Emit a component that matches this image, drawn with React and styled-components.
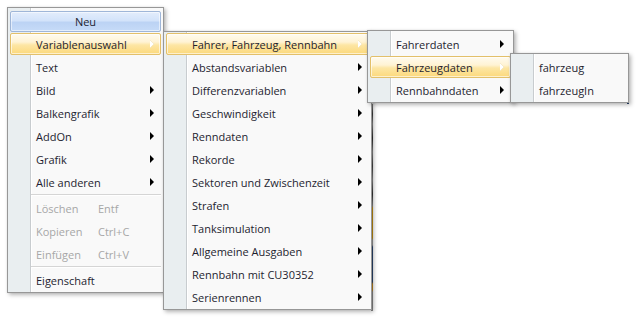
import React from 'react';
import styled, { createGlobalStyle } from 'styled-components';

const GlobalStyle = createGlobalStyle`
  html, body {
    margin: 0;
    padding: 0;
    background: #ffffff;
  }
  body {
    font-family: 'Open Sans', 'Noto Sans', sans-serif;
    font-size: 11px;
    color: #1e1e30;
  }
`;

const mainItems = [
  { label: 'Variablenauswahl', sub: true, active: true },
  { label: 'Text' },
  { label: 'Bild', sub: true },
  { label: 'Balkengrafik', sub: true },
  { label: 'AddOn', sub: true },
  { label: 'Grafik', sub: true },
  { label: 'Alle anderen', sub: true },
  { sep: true },
  { label: 'Löschen', key: 'Entf', disabled: true },
  { label: 'Kopieren', key: 'Ctrl+C', disabled: true },
  { label: 'Einfügen', key: 'Ctrl+V', disabled: true },
  { sep: true },
  { label: 'Eigenschaft' },
];

const varItems = [
  { label: 'Fahrer, Fahrzeug, Rennbahn', sub: true, active: true },
  { label: 'Abstandsvariablen', sub: true },
  { label: 'Differenzvariablen', sub: true },
  { label: 'Geschwindigkeit', sub: true },
  { label: 'Renndaten', sub: true },
  { label: 'Rekorde', sub: true },
  { label: 'Sektoren und Zwischenzeit', sub: true },
  { label: 'Strafen', sub: true },
  { label: 'Tanksimulation', sub: true },
  { label: 'Allgemeine Ausgaben', sub: true },
  { label: 'Rennbahn mit CU30352', sub: true },
  { label: 'Serienrennen', sub: true },
];

const groupItems = [
  { label: 'Fahrerdaten', sub: true },
  { label: 'Fahrzeugdaten', sub: true, active: true },
  { label: 'Rennbahndaten', sub: true },
];

const carItems = [{ label: 'fahrzeug' }, { label: 'fahrzeugIn' }];

const MenuList = ({ items, left, top, width, padTop = 2, children }) => (
  <Menu $left={left} $top={top} $width={width} $padTop={padTop}>
    {children}
    {items.map((item, i) =>
      item.sep ? (
        <Separator key={i} />
      ) : (
        <Item key={i} $active={item.active} $disabled={item.disabled}>
          <Label $fixed={!!item.key}>{item.label}</Label>
          {item.key && <Shortcut>{item.key}</Shortcut>}
          {item.sub && <Arrow $active={item.active} />}
        </Item>
      )
    )}
  </Menu>
);

const App = () => (
  <>
    <GlobalStyle />
    <Canvas>
      <WindowEdge $left={371} $top={104} $height={207} $kind="left" />
      <WindowEdge $left={627} $top={53} $height={51} $kind="right" />
      <MenuList items={mainItems} left={7} top={7} width={157}>
        <NewButton>Neu</NewButton>
      </MenuList>
      <MenuList items={varItems} left={163} top={31} width={209} padTop={1} />
      <MenuList items={groupItems} left={367} top={30} width={147} />
      <MenuList items={carItems} left={510} top={53} width={119} />
    </Canvas>
  </>
);

export default App;

const Canvas = styled.div`
  position: relative;
  width: 638px;
  height: 321px;
  overflow: hidden;
  background: #ffffff;
`;

const WindowEdge = styled.div`
  position: absolute;
  left: ${(p) => p.$left}px;
  top: ${(p) => p.$top}px;
  width: 2px;
  height: ${(p) => p.$height}px;
  background: ${(p) =>
    p.$kind === 'left'
      ? `linear-gradient(to bottom,
          #8c8c8c 0px, #3a3a3a 10px, #8c8c8c 20px, #2e2e2e 34px, #8c8c8c 48px,
          #444 62px, #8c8c8c 76px, #333 90px, #8c8c8c 102px,
          #c8920e 104px, #c8920e 134px, #9a9a9a 136px, #9a9a9a 141px,
          #2c4770 143px, #2c4770 178px, #c0861c 180px, #c0861c 186px,
          #8c8c8c 188px, #8c8c8c 207px)`
      : `linear-gradient(to bottom, #f5c400 0px, #e0b000 8px, #2c4770 20px, #2c4770 51px)`};
`;

const Menu = styled.div`
  position: absolute;
  left: ${(p) => p.$left}px;
  top: ${(p) => p.$top}px;
  width: ${(p) => p.$width}px;
  box-sizing: border-box;
  display: flex;
  flex-direction: column;
  padding: ${(p) => p.$padTop}px 2px 0;
  border: 1px solid #979797;
  background: linear-gradient(
    to right,
    #e9eef0 0px,
    #e9eef0 22px,
    #c8cccf 22px,
    #c8cccf 23px,
    #ffffff 23px,
    #ffffff 24px,
    #f9f9f9 24px
  );
  box-shadow: 2px 2px 4px rgba(0, 0, 0, 0.28), 0 0 2px rgba(0, 0, 0, 0.08);
`;

const NewButton = styled.div`
  box-sizing: border-box;
  height: 21px;
  margin: 1px 0 1px;
  border: 1px solid #9fb6d8;
  border-radius: 2px;
  background: linear-gradient(to bottom, #e3edfc 0%, #d3e3fa 45%, #bcd3f4 55%, #c6dbf8 100%);
  box-shadow: inset 0 0 0 1px rgba(255, 255, 255, 0.55);
  text-align: center;
  line-height: 19px;
  color: #1e1e30;
`;

const Item = styled.div`
  box-sizing: border-box;
  display: flex;
  align-items: center;
  height: 22px;
  margin-bottom: 1px;
  padding: 0 6px 0 25px;
  border: 1px solid ${(p) => (p.$active ? '#e3c06a' : 'transparent')};
  border-radius: 2px;
  background: ${(p) =>
    p.$active
      ? 'linear-gradient(to bottom, #fffbef 0%, #fff3d4 40%, #fde6a4 55%, #fcd97c 100%)'
      : 'transparent'};
  box-shadow: ${(p) => (p.$active ? 'inset 0 0 0 1px rgba(255,255,255,0.6)' : 'none')};
  color: ${(p) => (p.$disabled ? '#a7a7a7' : '#1e1e30')};
  white-space: nowrap;
`;

const Label = styled.span`
  flex: ${(p) => (p.$fixed ? '0 0 62px' : '1')};
`;

const Shortcut = styled.span`
  flex: 1;
`;

const Arrow = styled.span`
  width: 0;
  height: 0;
  border-top: 4px solid transparent;
  border-bottom: 4px solid transparent;
  border-left: 4px solid ${(p) => (p.$active ? '#ffffff' : '#000000')};
  filter: ${(p) => (p.$active ? 'drop-shadow(0 0 0.5px #d9b760)' : 'none')};
`;

const Separator = styled.div`
  height: 1px;
  margin: 0 0 1px 21px;
  background: #d5d5d5;
  border-bottom: 1px solid #ffffff;
`;
